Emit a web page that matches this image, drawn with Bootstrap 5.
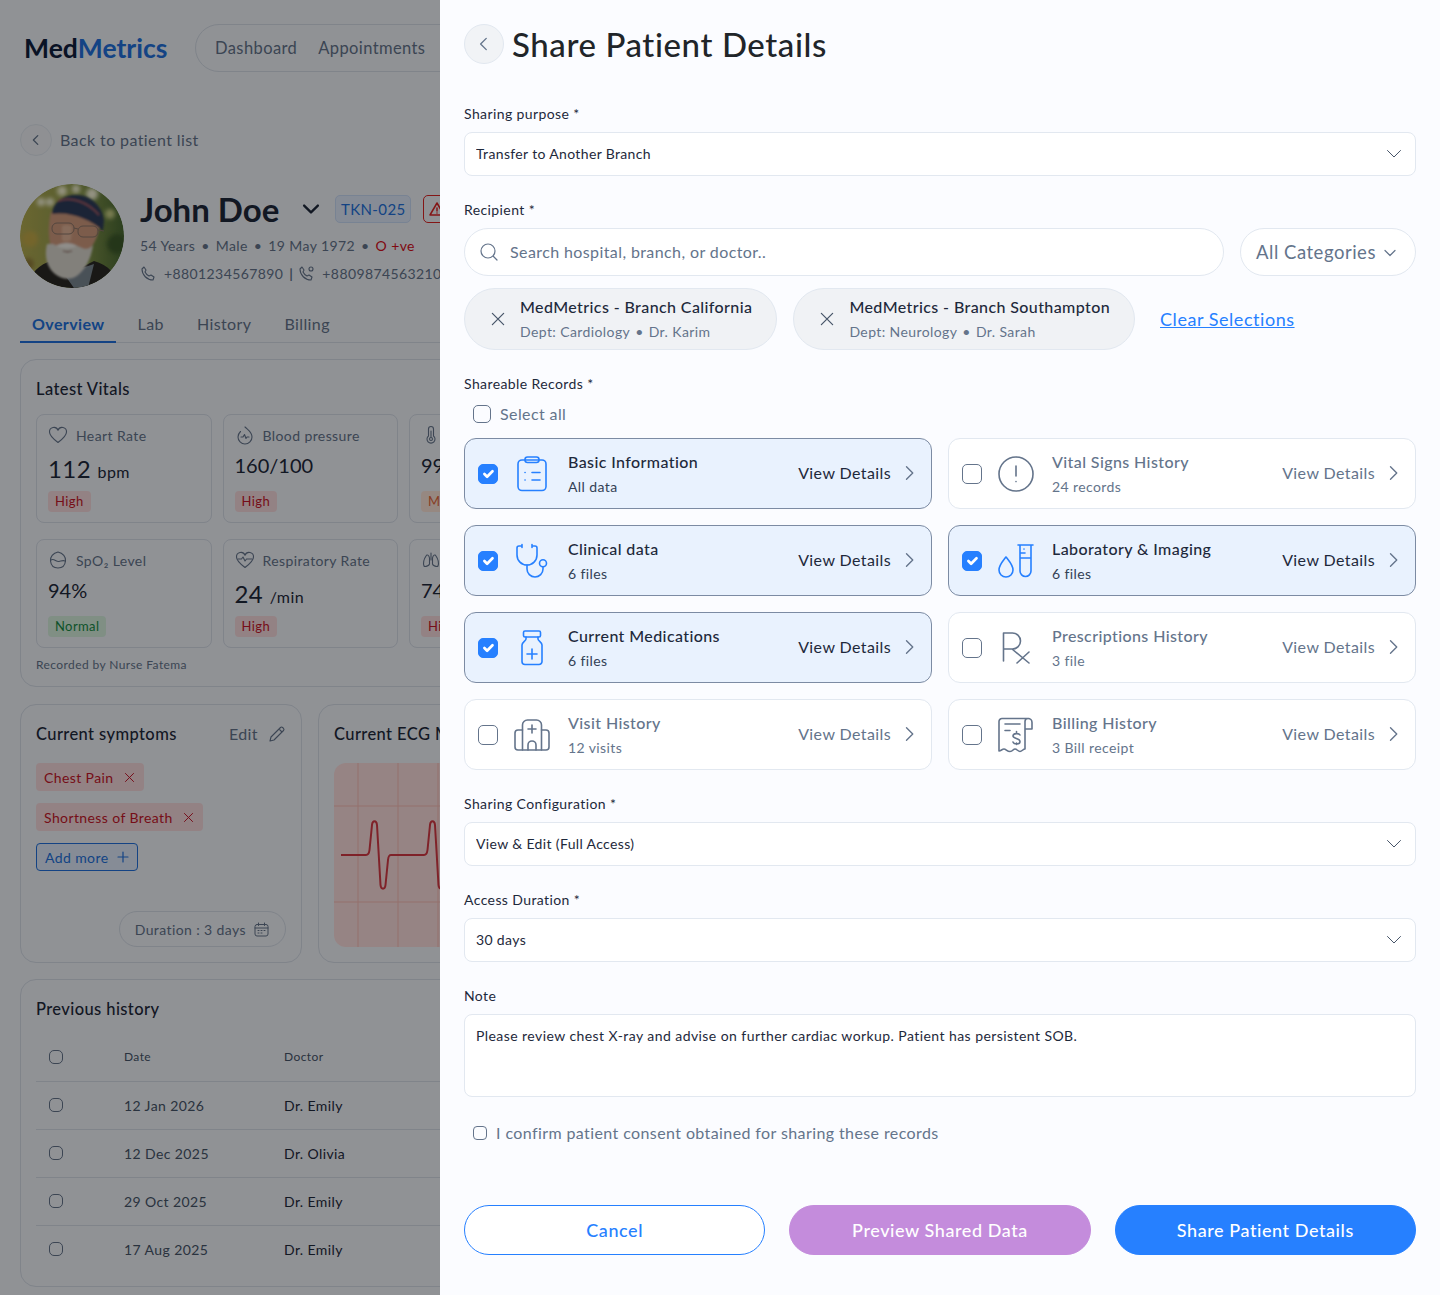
<!DOCTYPE html>
<html lang="en">

<head>
    <meta charset="UTF-8" />
    <title>MedMetrics - Share Patient Details</title>
    <link href="https://cdn.jsdelivr.net/npm/bootstrap@5.3.0/dist/css/bootstrap.min.css" rel="stylesheet" />
    <style>
        body {
            background: #f0f3f9;
            font-family: "Lato", "Liberation Sans", sans-serif;
            color: #1e293b;
            overflow: hidden;
            height: 1295px;
            letter-spacing: .025em;
        }

        .ic {
            fill: none;
            stroke: currentColor;
            stroke-width: 1.5;
            stroke-linecap: round;
            stroke-linejoin: round;
            flex-shrink: 0;
        }

        .offcanvas-backdrop.fade.show {
            background: #000;
            opacity: .4;
            transition: none;
        }

        .sep {
            margin: 0 5px;
        }

        /* page behind the panel */
        .top-bar {
            height: 96px;
            padding: 24px 24px 0;
        }

        .brand-name {
            height: 48px;
            font-size: 26.5px;
            font-weight: 700;
            width: 171px;
            color: #10203f;
            letter-spacing: 0;
            padding-top: 1px;
        }

        .brand-name span {
            color: #2271dc;
        }

        .top-links {
            width: 900px;
            height: 48px;
            border: 1px solid #d5dce6;
            border-radius: 24px;
            padding-left: 19px;
            gap: 21px;
            font-size: 16.5px;
            color: #64748b;
        }

        .page-wrap {
            padding: 28px 20px 0;
            width: 1440px;
        }

        .back-dot {
            width: 32px;
            height: 32px;
            border-radius: 50%;
            border: 1px solid #dfe5ed;
            background: #eef1f5;
            color: #64748b;
        }

        .back-row {
            font-size: 16px;
            color: #64748b;
            gap: 8px;
            margin-bottom: 28px;
        }

        .person-pic {
            width: 104px;
            height: 104px;
            border-radius: 50%;
            margin-right: 16px;
        }

        .person-name {
            font-size: 33px;
            font-weight: 700;
            line-height: 50px;
            margin: 0 21px 0 0;
            letter-spacing: 0;
        }

        .tkn-tag {
            height: 28px;
            width: 76px;
            border: 1px solid #c8daf5;
            background: #dfeafb;
            color: #2271dc;
            border-radius: 5px;
            font-size: 15px;
            margin-left: 13px;
        }

        .alert-tag {
            height: 28px;
            width: 100px;
            border: 1px solid #dc2626;
            border-radius: 5px;
            margin-left: 12px;
            color: #dc2626;
        }

        .person-meta {
            font-size: 14px;
            color: #64748b;
            line-height: 24px;
        }

        .person-meta .sep {
            margin: 0 6px;
        }

        .phone-row {
            margin-top: 4px;
        }

        .pipe {
            font-weight: 700;
            margin: 0 -3px 0 -2px;
        }

        .blood {
            color: #d50f1c;
        }

        .tab-row {
            margin-top: 24px;
            border-bottom: 1px solid #d5dce6;
            height: 31px;
            gap: 33px;
            padding-left: 12px;
            font-size: 16px;
            color: #64748b;
            margin-bottom: 16px;
        }

        .tab-on {
            color: #2271dc;
            font-weight: 700;
            position: relative;
        }

        .tab-on::after {
            content: "";
            position: absolute;
            left: -12px;
            right: -11px;
            top: 29px;
            height: 2px;
            background: #2271dc;
        }

        .box-round {
            border: 1px solid #d5dce6;
            border-radius: 16px;
            padding: 15px;
        }

        .box-title {
            font-size: 16.5px;
            font-weight: 500;
            line-height: 28px;
        }

        .vital-grid {
            display: grid;
            grid-template-columns: repeat(4, 175.5px);
            gap: 16px 11px;
            margin-top: 11px;
        }

        .vital-tile {
            border: 1px solid #d5dce6;
            border-radius: 8px;
            height: 109px;
            padding: 8px 11px;
        }

        .vital-label {
            font-size: 14px;
            color: #64748b;
            gap: 8px;
            height: 24px;
        }

        .vital-num {
            font-size: 24px;
            line-height: 32px;
            margin-top: 6px;
            height: 38px;
        }

        .vital-num small {
            font-size: 16px;
        }

        .vital-num.num-plain {
            font-size: 20px;
            letter-spacing: 0;
            margin-top: 2px;
            height: 42px;
        }

        .flag {
            display: block;
            width: fit-content;
            font-size: 13px;
            line-height: 21px;
            padding: 0 7px;
            border-radius: 4px;
        }

        .flag-high {
            background: #f6d9dc;
            color: #c5162a;
        }

        .flag-ok {
            background: #d5eedd;
            color: #178a45;
        }

        .flag-mid {
            background: #fbe3d8;
            color: #e2673a;
        }

        .recorded {
            font-size: 12px;
            color: #64748b;
            margin-top: 8px;
            line-height: 18px;
        }

        .mid-row {
            margin-top: 17px;
            gap: 16px;
            height: 259px;
        }

        .symptom-box {
            width: 282px;
            flex-shrink: 0;
            position: relative;
        }

        .ecg-box {
            flex-grow: 1;
        }

        .edit-link {
            color: #64748b;
            font-size: 16px;
            gap: 10px;
        }

        .sym-tag {
            height: 28px;
            background: #f6d9dc;
            color: #c5162a;
            border-radius: 4px;
            font-size: 14px;
            padding: 0 8px;
            gap: 9px;
            width: fit-content;
            margin-top: 12px;
        }

        .sym-first {
            margin-top: 15px;
        }

        .add-tag {
            background: #dfeafb;
            color: #2271dc;
            border: 1px solid #2271dc;
        }

        .duration-pill {
            position: absolute;
            right: 15px;
            bottom: 15px;
            height: 36px;
            border: 1px solid #d5dce6;
            border-radius: 18px;
            padding: 0 16px 0 15px;
            gap: 8px;
            font-size: 14px;
            color: #64748b;
        }

        .ecg-chart {
            display: block;
            margin-top: 15px;
            border-radius: 12px;
        }

        .history-box {
            margin-top: 16px;
            height: 308px;
        }

        .hist-table {
            margin: 10px 0 0;
            --bs-table-bg: transparent;
            --bs-table-color: #1e293b;
            --bs-table-border-color: #d5dce6;
            font-size: 14px;
        }

        .hist-table th,
        .hist-table td {
            height: 48px;
            vertical-align: middle;
            padding: 0;
            font-weight: 400;
        }

        .hist-table tr:last-child td {
            border-bottom: 0;
        }

        .hist-table th {
            font-size: 12px;
            color: #475569;
        }

        .hist-table .col-cb {
            width: 88px;
            padding-left: 13px;
        }

        .hist-table .col-date {
            width: 160px;
            color: #475569;
        }

        .hist-table .form-check-input {
            width: 14px;
            height: 14px;
            margin: 0;
            display: block;
        }

        /* panel */
        .share-panel {
            --bs-offcanvas-width: 1000px;
            --bs-offcanvas-border-width: 0;
            --bs-offcanvas-bg: #fbfcff;
            transition: none;
        }

        .share-body {
            padding: 24px;
            overflow: hidden;
        }

        .panel-head {
            height: 40px;
            gap: 8px;
            margin-bottom: 40px;
        }

        .panel-back {
            width: 40px;
            height: 40px;
            border-radius: 50%;
            border: 1px solid #e2e8f0;
            background: #f1f3f6;
            color: #64748b;
        }

        .panel-head h1 {
            font-size: 33px;
            font-weight: 500;
            margin: 2px 0 0;
            letter-spacing: .018em;
        }

        .fld-label {
            display: block;
            font-size: 14px;
            line-height: 20px;
            margin-bottom: 8px;
            color: #1e293b;
        }

        .fld-select,
        .fld-note {
            height: 44px;
            border: 1px solid #e2e8f0;
            border-radius: 8px;
            background-color: #fff;
            font-size: 14px;
            color: #1e293b;
            padding-left: 11px;
            letter-spacing: .025em;
            box-shadow: none;
            margin-bottom: 24px;
        }

        .fld-select {
            --bs-form-select-bg-img: url("data:image/svg+xml,%3csvg xmlns='http://www.w3.org/2000/svg' viewBox='0 0 16 10'%3e%3cpath fill='none' stroke='%23475569' stroke-linecap='round' stroke-linejoin='round' d='M1.5 1.5 8 8l6.5-6.5'/%3e%3c/svg%3e");
            background-position: right 13px center;
            background-size: 16px 10px;
            padding-top: 0;
            padding-bottom: 2px;
        }

        .fld-note {
            height: 83px;
            resize: none;
            padding-top: 10px;
            letter-spacing: .031em;
        }

        .search-wrap {
            height: 48px;
            border: 1px solid #e2e8f0;
            border-radius: 24px;
            background: #fff;
            padding: 0 15px;
            gap: 10px;
            flex-grow: 1;
            color: #64748b;
        }

        .search-wrap input {
            border: 0;
            outline: 0;
            background: transparent;
            flex-grow: 1;
            font-size: 16px;
            letter-spacing: .025em;
        }

        .search-wrap input::placeholder {
            color: #64748b;
        }

        .cat-btn {
            width: 176px;
            height: 48px;
            border: 1px solid #e2e8f0;
            border-radius: 24px;
            background: #fff;
            color: #64748b;
            font-size: 18.5px;
            letter-spacing: .028em;
            padding: 1px 17px 0 15px;
        }

        .chip-row {
            margin: 12px 0 24px;
            gap: 16px;
        }

        .rec-chip {
            height: 62px;
            border: 1px solid #e2e8f0;
            border-radius: 31px;
            background: #f0f2f5;
            padding: 0 24px 0 24px;
            gap: 13px;
            color: #475569;
        }

        .rec-chip b {
            display: block;
            font-size: 16px;
            font-weight: 500;
            line-height: 24px;
            color: #1e293b;
        }

        .rec-chip span.sub-line {
            display: block;
            font-size: 14px;
            line-height: 24px;
            margin-top: 1px;
            color: #64748b;
        }

        .clear-link {
            font-size: 18px;
            color: #2680ff;
            margin-left: 9px;
            letter-spacing: .03em;
        }

        .select-all {
            height: 24px;
            margin: 8px 0 12px 9px;
            gap: 9px;
            font-size: 16px;
            color: #64748b;
        }

        .select-all .form-check-input {
            width: 18px;
            height: 18px;
            margin: 0;
        }

        .form-check-input {
            border: 1.5px solid #64748b;
            background-color: transparent;
            box-shadow: none;
        }

        .form-check-input[type=checkbox] {
            border-radius: 5px;
        }

        .form-check-input:checked {
            background-color: #2680ff;
            border-color: #2680ff;
        }

        .rec-card {
            height: 71px;
            border: 1px solid #e2e8f0;
            border-radius: 12px;
            background: #fff;
            padding: 0 12px 0 13px;
            color: #64748b;
        }

        .rec-card .form-check-input {
            width: 20px;
            height: 20px;
            margin: 0;
            flex-shrink: 0;
        }

        .rec-icon {
            width: 36px;
            height: 36px;
            margin: 0 18px 0 16px;
            flex-shrink: 0;
            stroke-width: 1.6;
        }

        .rec-title {
            font-size: 16px;
            font-weight: 500;
            line-height: 24px;
            margin-top: 1px;
        }

        .rec-sub {
            font-size: 14px;
            line-height: 24px;
            margin-top: 1px;
        }

        .view-link {
            font-size: 16px;
            margin-left: auto;
            gap: 8px;
            margin-top: -2px;
        }

        .view-link svg {
            stroke-width: 1.1;
        }

        .rec-card.picked {
            background: #e9f2fe;
            border-color: #7c8ba3;
            color: #1e293b;
        }

        .rec-card.picked .rec-icon {
            color: #2680ff;
        }

        .rec-card.picked .rec-sub {
            color: #334155;
        }

        .rec-card.picked .view-link svg {
            color: #64748b;
        }

        .records-grid {
            margin-bottom: 24px;
        }

        .consent-row {
            height: 24px;
            margin: 0 0 60px 9px;
            gap: 9px;
            font-size: 16px;
            color: #64748b;
        }

        .consent-row .form-check-input {
            width: 14px;
            height: 14px;
            margin: 0;
        }

        .consent-row .form-check-input[type=checkbox] {
            border-radius: 4px;
        }

        .foot-btns {
            gap: 24px;
        }

        .foot-btn {
            flex: 1 1 0;
            height: 50px;
            border-radius: 25px;
            font-size: 18px;
            font-weight: 500;
            letter-spacing: .032em;
            border: 1px solid #2680ff;
        }

        .btn-cancel {
            color: #2680ff;
            background: #fff;
        }

        .btn-preview {
            background: #c48cdc;
            border-color: #c48cdc;
            color: #fff;
        }

        .btn-share {
            background: #2680ff;
            color: #fff;
        }
    </style>
</head>

<body>

    <svg width="0" height="0" class="position-absolute">
        <symbol id="chev-r" viewBox="0 0 16 16"><path d="M6 3l5 5-5 5" /></symbol>
        <symbol id="chev-l" viewBox="0 0 16 16"><path d="M10 3L5 8l5 5" /></symbol>
        <symbol id="chev-d" viewBox="0 0 16 16"><path d="M3 5.5l5 5 5-5" /></symbol>
        <symbol id="cross" viewBox="0 0 16 16"><path d="M3 3l10 10M13 3L3 13" /></symbol>
    </svg>

    <!-- page behind the panel -->
    <header class="top-bar d-flex">
        <div class="brand-name d-flex align-items-center">Med<span>Metrics</span></div>
        <div class="top-links d-flex align-items-center">
            <span>Dashboard</span>
            <span>Appointments</span>
        </div>
    </header>

    <main class="page-wrap">
        <div class="back-row d-flex align-items-center">
            <span class="back-dot d-flex align-items-center justify-content-center"><svg class="ic" width="14" height="14"><use href="#chev-l" /></svg></span>
            Back to patient list
        </div>

        <div class="d-flex">
            <svg class="person-pic" viewBox="0 0 104 104">
                <defs>
                    <clipPath id="pic-clip"><circle cx="52" cy="52" r="52" /></clipPath>
                    <linearGradient id="pic-bg" x1="0" x2="1" y1="0" y2="0">
                        <stop offset="0" stop-color="#b3ab52" />
                        <stop offset=".55" stop-color="#8d9a4e" />
                        <stop offset="1" stop-color="#4a6a34" />
                    </linearGradient>
                    <filter id="pic-blur"><feGaussianBlur stdDeviation="2" /></filter>
                    <filter id="pic-soft"><feGaussianBlur stdDeviation=".8" /></filter>
                </defs>
                <g clip-path="url(#pic-clip)">
                    <rect width="104" height="104" fill="url(#pic-bg)" />
                    <g filter="url(#pic-blur)">
                        <circle cx="21" cy="18" r="4" fill="#f4f3d6" />
                        <circle cx="30" cy="18" r="4" fill="#f4f3d6" />
                        <circle cx="42" cy="7" r="5" fill="#f5f3d0" />
                        <circle cx="56" cy="5" r="4" fill="#f5f3d8" />
                        <circle cx="72" cy="10" r="6" fill="#f5f3d8" />
                        <circle cx="90" cy="30" r="5" fill="#c9cf86" />
                        <circle cx="10" cy="55" r="8" fill="#c2a84a" />
                        <circle cx="97" cy="60" r="10" fill="#3c5a2a" />
                        <circle cx="8" cy="80" r="6" fill="#8f7a3a" />
                    </g>
                    <path d="M8 104c2-12 6-20 20-26l24 10 22-11c14 4 24 14 26 27z" fill="#2a2825" />
                    <path d="M44 90l10 14h14l6-24z" fill="#7b8792" />
                    <g filter="url(#pic-soft)">
                        <path d="M31 28c-3 12-3 26 0 36 5 9 14 12 24 10 14-4 22-16 24-30 1-6 0-10-1-14z" fill="#cf9a7e" />
                        <path d="M42 42c5-2 8-1 10 1l-1 13c-4 2-7 2-9 0z" fill="#e0b398" />
                        <path d="M32 30c1-12 12-20 26-19 14 1 25 12 26 26l-1 10c-11-11-33-20-51-17z" fill="#2d3c5a" />
                        <path d="M38 17c13-5 30 1 41 14" fill="none" stroke="#a55f68" stroke-width="1.4" />
                        <path d="M27 60c-3 12 0 24 8 30 6 5 14 6 20 3 9-5 16-17 18-32-3 4-7 5-11 3-5-3-11-4-16-1-5 0-10-1-13-3-2 0-4 0-6 0z" fill="#d9d6cd" />
                        <path d="M36 62c6-4 15-4 21 0-6 3-15 3-21 0z" fill="#efece6" />
                        <path d="M43 67c3 1 6 1 9 0" stroke="#86594e" stroke-width="1.3" fill="none" />
                    </g>
                    <g fill="none" stroke="#8a7468" stroke-width="1">
                        <rect x="32" y="39" width="22" height="11" rx="5" />
                        <rect x="58" y="42" width="20" height="11" rx="5" />
                        <path d="M54 44l4 1M78 46l6 1" />
                    </g>
                </g>
            </svg>
            <div>
                <div class="d-flex align-items-center">
                    <h2 class="person-name">John Doe</h2>
                    <svg class="ic" width="22" height="22" style="stroke-width:1.7"><use href="#chev-d" /></svg>
                    <span class="tkn-tag d-flex align-items-center justify-content-center">TKN-025</span>
                    <span class="alert-tag d-flex align-items-center ps-1">
                        <svg class="ic" width="18" height="18" viewBox="0 0 18 18"><path d="M9 3l7 12H2zM9 8v3M9 13v.1" /></svg>
                    </span>
                </div>
                <div class="person-meta">54 Years<span class="sep">•</span>Male<span class="sep">•</span>19 May 1972<span class="sep">•</span><span class="blood">O +ve</span></div>
                <div class="person-meta phone-row d-flex align-items-center gap-2">
                    <svg class="ic" width="16" height="16" viewBox="0 0 16 16" style="stroke-width:1.1"><path d="M2 3c0 6 5 11 11 11l1-3-3-2-2 1C7 9 6 8 5 6l1-2-2-3z" /></svg>
                    <span>+8801234567890</span>
                    <span class="pipe">|</span>
                    <svg class="ic" width="16" height="16" viewBox="0 0 16 16" style="stroke-width:1.1"><path d="M2 3c0 6 5 11 11 11l1-3-3-2-2 1C7 9 6 8 5 6l1-2-2-3z" /><circle cx="13" cy="3" r="2" /></svg>
                    <span>+8809874563210</span>
                </div>
            </div>
        </div>

        <div class="tab-row d-flex">
            <span class="tab-on">Overview</span>
            <span>Lab</span>
            <span>History</span>
            <span>Billing</span>
        </div>

        <section class="box-round" style="height:328px">
            <div class="box-title">Latest Vitals</div>
            <div class="vital-grid">
                <div class="vital-tile">
                    <div class="vital-label d-flex align-items-center">
                        <svg class="ic" width="20" height="20" viewBox="0 0 20 20" style="stroke-width:1.1"><path d="M10 17.5C4 13 1.5 10 1.5 7A4.4 4.4 0 0 1 10 5.2 4.4 4.4 0 0 1 18.5 7c0 3-2.5 6-8.5 10.5z" /></svg>
                        Heart Rate
                    </div>
                    <div class="vital-num">112 <small>bpm</small></div>
                    <span class="flag flag-high">High</span>
                </div>
                <div class="vital-tile">
                    <div class="vital-label d-flex align-items-center">
                        <svg class="ic" width="20" height="20" viewBox="0 0 20 20" style="stroke-width:1.1"><path d="M10 2c3 3 7 5 7 10a7 7 0 0 1-14 0c0-2 1-4 2.5-5.5" /><path d="M6 12h2l1.5-2.5 1.5 4 1-1.5h2" /></svg>
                        Blood pressure
                    </div>
                    <div class="vital-num num-plain">160/100</div>
                    <span class="flag flag-high">High</span>
                </div>
                <div class="vital-tile">
                    <div class="vital-label d-flex align-items-center">
                        <svg class="ic" width="20" height="20" viewBox="0 0 20 20" style="stroke-width:1.1"><path d="M7.5 11V4a2.5 2.5 0 0 1 5 0v7a4 4 0 1 1-5 0z" /><circle cx="10" cy="14" r="1.5" /><path d="M10 6v6" /></svg>
                    </div>
                    <div class="vital-num num-plain">99</div>
                    <span class="flag flag-mid">Mild</span>
                </div>
                <div class="vital-tile">
                    <div class="vital-num">&nbsp;</div>
                </div>
                <div class="vital-tile">
                    <div class="vital-label d-flex align-items-center">
                        <svg class="ic" width="20" height="20" viewBox="0 0 20 20" style="stroke-width:1.1"><path d="M10 2c-5 1-8 5-7.5 9 .5 4.5 3.5 7 7.5 7s7-2.5 7.5-7C18 7 15 3 10 2z" /><path d="M3 10c3-2 5 2 8 1.5 2-.3 4-1.500 6-.5" /></svg>
                        SpO₂ Level
                    </div>
                    <div class="vital-num num-plain">94%</div>
                    <span class="flag flag-ok">Normal</span>
                </div>
                <div class="vital-tile">
                    <div class="vital-label d-flex align-items-center">
                        <svg class="ic" width="20" height="20" viewBox="0 0 20 20" style="stroke-width:1.1"><path d="M10 17.5C4 13 1.5 10 1.5 7A4.4 4.4 0 0 1 10 5.2 4.4 4.4 0 0 1 18.5 7c0 3-2.5 6-8.5 10.5z" /><path d="M3 9h3.5l1.5-2 2 4 1.5-2H17" /></svg>
                        Respiratory Rate
                    </div>
                    <div class="vital-num">24 <small>/min</small></div>
                    <span class="flag flag-high">High</span>
                </div>
                <div class="vital-tile">
                    <div class="vital-label d-flex align-items-center">
                        <svg class="ic" width="20" height="20" viewBox="0 0 20 20" style="stroke-width:1.1"><path d="M10 3v7M8.5 8C8 5 6 4 5 6 3 9 2 13 3 16c1 1 5 0 5.5-2zM11.5 8c.5-3 2.5-4 3.500-2 2 3 3 7 2 10-1 1-5 0-5.500-2z" /></svg>
                    </div>
                    <div class="vital-num num-plain">74</div>
                    <span class="flag flag-high">High</span>
                </div>
            </div>
            <div class="recorded">Recorded by Nurse Fatema</div>
        </section>

        <div class="mid-row d-flex">
            <section class="box-round symptom-box">
                <div class="d-flex align-items-center justify-content-between" style="height:28px;">
                    <div class="box-title">Current symptoms</div>
                    <div class="edit-link d-flex align-items-center">Edit
                        <svg class="ic" width="18" height="18" viewBox="0 0 18 18" style="stroke-width:1.1"><path d="M2 16l1-4L12.5 2.5a1.5 1.5 0 0 1 2.1 0l.9.9a1.5 1.5 0 0 1 0 2.1L6 15zM11 4l3 3" /></svg>
                    </div>
                </div>
                <div class="sym-tag sym-first d-flex align-items-center">Chest Pain <svg class="ic" width="13" height="13" style="stroke-width:1.2"><use href="#cross" /></svg></div>
                <div class="sym-tag d-flex align-items-center">Shortness of Breath <svg class="ic" width="13" height="13" style="stroke-width:1.2"><use href="#cross" /></svg></div>
                <div class="sym-tag add-tag d-flex align-items-center">Add more <svg class="ic" width="12" height="12" viewBox="0 0 12 12" style="stroke-width:1.2"><path d="M6 1v10M1 6h10" /></svg></div>
                <div class="duration-pill d-flex align-items-center">Duration : 3 days
                    <svg class="ic" width="15" height="15" viewBox="0 0 15 15" style="stroke-width:1"><rect x="1" y="2.5" width="13" height="11.5" rx="2" /><path d="M1 6h13M4.5 1v2.5M10.5 1v2.5M4 8.5h1M7 8.5h1M10 8.5h1M4 11h1M7 11h1" /></svg>
                </div>
            </section>
            <section class="box-round ecg-box">
                <div class="box-title">Current ECG Monitor</div>
                <svg class="ecg-chart" width="400" height="184" viewBox="0 0 400 184">
                    <rect width="400" height="184" fill="#fbdcdc" />
                    <path d="M24 0v184M64 0v184M104 0v184M0 43h400M0 139h400" stroke="#f6bcb4" stroke-width="1" fill="none" />
                    <path d="M7 92h25c2 0 3-1 3.5-5L38 62c.5-5 4.5-5 5 0l3.5 60c.5 5 4.5 5 5 0L54 97c.5-4 1-5 3-5h33c2 0 3-1 3.5-5L96 62c.5-5 4.5-5 5 0l3.5 60c.5 5 4.5 5 5 0l2.5-25c.5-4 1-5 3-5h10" fill="none" stroke="#d43a45" stroke-width="2" />
                </svg>
            </section>
        </div>

        <section class="box-round history-box">
            <div class="box-title">Previous history</div>
            <table class="table hist-table">
                <thead>
                    <tr><th class="col-cb"><input class="form-check-input" type="checkbox" /></th><th class="col-date">Date</th><th>Doctor</th></tr>
                </thead>
                <tbody>
                    <tr><td class="col-cb"><input class="form-check-input" type="checkbox" /></td><td class="col-date">12 Jan 2026</td><td>Dr. Emily</td></tr>
                    <tr><td class="col-cb"><input class="form-check-input" type="checkbox" /></td><td class="col-date">12 Dec 2025</td><td>Dr. Olivia</td></tr>
                    <tr><td class="col-cb"><input class="form-check-input" type="checkbox" /></td><td class="col-date">29 Oct 2025</td><td>Dr. Emily</td></tr>
                    <tr><td class="col-cb"><input class="form-check-input" type="checkbox" /></td><td class="col-date">17 Aug 2025</td><td>Dr. Emily</td></tr>
                </tbody>
            </table>
        </section>
    </main>

    <div class="offcanvas-backdrop fade show"></div>

    <!-- share panel: the backdrop is the div above, so bootstrap must not add a second one on load -->
    <aside class="offcanvas offcanvas-end show share-panel" tabindex="-1" data-bs-backdrop="false">
        <div class="offcanvas-body share-body">
            <div class="panel-head d-flex align-items-center">
                <span class="panel-back d-flex align-items-center justify-content-center"><svg class="ic" width="18" height="18" style="stroke-width:1.2"><use href="#chev-l" /></svg></span>
                <h1>Share Patient Details</h1>
            </div>

            <label class="fld-label">Sharing purpose *</label>
            <select class="form-select fld-select">
                <option>Transfer to Another Branch</option>
            </select>

            <label class="fld-label">Recipient *</label>
            <div class="d-flex gap-3">
                <div class="search-wrap d-flex align-items-center">
                    <svg class="ic" width="18" height="18" viewBox="0 0 18 18" style="stroke-width:1.2"><circle cx="8" cy="8" r="7" /><path d="M13.5 13.5L17 17" /></svg>
                    <input type="text" placeholder="Search hospital, branch, or doctor.." />
                </div>
                <button class="cat-btn d-flex align-items-center justify-content-between" type="button">All Categories
                    <svg class="ic" width="16" height="16" style="stroke-width:1.2"><use href="#chev-d" /></svg>
                </button>
            </div>

            <div class="chip-row d-flex align-items-center">
                <div class="rec-chip d-flex align-items-center">
                    <svg class="ic" width="18" height="18" style="stroke-width:1.1"><use href="#cross" /></svg>
                    <div>
                        <b>MedMetrics - Branch California</b>
                        <span class="sub-line">Dept: Cardiology<span class="sep">•</span>Dr. Karim</span>
                    </div>
                </div>
                <div class="rec-chip d-flex align-items-center">
                    <svg class="ic" width="18" height="18" style="stroke-width:1.1"><use href="#cross" /></svg>
                    <div>
                        <b>MedMetrics - Branch Southampton</b>
                        <span class="sub-line">Dept: Neurology<span class="sep">•</span>Dr. Sarah</span>
                    </div>
                </div>
                <a class="clear-link" href="#">Clear Selections</a>
            </div>

            <label class="fld-label mb-0">Shareable Records *</label>
            <div class="select-all d-flex align-items-center">
                <input class="form-check-input" type="checkbox" />
                Select all
            </div>

            <div class="row row-cols-2 g-3 records-grid">
                <div class="col">
                    <div class="rec-card picked d-flex align-items-center">
                        <input class="form-check-input" type="checkbox" checked />
                        <svg class="ic rec-icon" viewBox="0 0 36 36"><rect x="4" y="4" width="28" height="30.5" rx="4" /><rect x="11" y="1" width="14" height="5.5" rx="2.5" /><path d="M11 16.5h.1M18 16.5h8M11 24h.1M18 24h8" /></svg>
                        <div>
                            <div class="rec-title">Basic Information</div>
                            <div class="rec-sub">All data</div>
                        </div>
                        <div class="view-link d-flex align-items-center">View Details <svg class="ic" width="20" height="20"><use href="#chev-r" /></svg></div>
                    </div>
                </div>
                <div class="col">
                    <div class="rec-card d-flex align-items-center">
                        <input class="form-check-input" type="checkbox" />
                        <svg class="ic rec-icon" viewBox="0 0 36 36"><circle cx="18" cy="18" r="17" /><path d="M18 10v10M18 25.5v.1" /></svg>
                        <div>
                            <div class="rec-title">Vital Signs History</div>
                            <div class="rec-sub">24 records</div>
                        </div>
                        <div class="view-link d-flex align-items-center">View Details <svg class="ic" width="20" height="20"><use href="#chev-r" /></svg></div>
                    </div>
                </div>
                <div class="col">
                    <div class="rec-card picked d-flex align-items-center">
                        <input class="form-check-input" type="checkbox" checked />
                        <svg class="ic rec-icon" viewBox="0 0 36 36"><path d="M8 3H5a2 2 0 0 0-2 2v7a10 10 0 0 0 20 0V5a2 2 0 0 0-2-2h-3M8 1.5v3M18 1.5v3" /><path d="M13 22v4a8 8 0 0 0 16 0v-2" /><circle cx="29" cy="20.3" r="3.5" /></svg>
                        <div>
                            <div class="rec-title">Clinical data</div>
                            <div class="rec-sub">6 files</div>
                        </div>
                        <div class="view-link d-flex align-items-center">View Details <svg class="ic" width="20" height="20"><use href="#chev-r" /></svg></div>
                    </div>
                </div>
                <div class="col">
                    <div class="rec-card picked d-flex align-items-center">
                        <input class="form-check-input" type="checkbox" checked />
                        <svg class="ic rec-icon" viewBox="0 0 36 36"><path d="M20 2h15M22 2v26a5.5 5.5 0 0 0 11 0V2M22 10h5M22 15h11M26 6v.1" /><path d="M8 14c-3 4-7 8-7 13a7 7 0 0 0 14 0c0-5-4-9-7-13z" /></svg>
                        <div>
                            <div class="rec-title">Laboratory &amp; Imaging</div>
                            <div class="rec-sub">6 files</div>
                        </div>
                        <div class="view-link d-flex align-items-center">View Details <svg class="ic" width="20" height="20"><use href="#chev-r" /></svg></div>
                    </div>
                </div>
                <div class="col">
                    <div class="rec-card picked d-flex align-items-center">
                        <input class="form-check-input" type="checkbox" checked />
                        <svg class="ic rec-icon" viewBox="0 0 36 36"><rect x="9.5" y="1" width="17" height="6" rx="1.5" /><path d="M12 7v2c0 2-4 3-4 6v16.5a3 3 0 0 0 3 3h14a3 3 0 0 0 3-3V15c0-3-4-4-4-6V7M18 19v10M13 24h10" /></svg>
                        <div>
                            <div class="rec-title">Current Medications</div>
                            <div class="rec-sub">6 files</div>
                        </div>
                        <div class="view-link d-flex align-items-center">View Details <svg class="ic" width="20" height="20"><use href="#chev-r" /></svg></div>
                    </div>
                </div>
                <div class="col">
                    <div class="rec-card d-flex align-items-center">
                        <input class="form-check-input" type="checkbox" />
                        <svg class="ic rec-icon" viewBox="0 0 36 36"><path d="M5.5 31V3h9a8 8 0 0 1 0 16h-9M14 19l17 14M31 22L19 33" /></svg>
                        <div>
                            <div class="rec-title">Prescriptions History</div>
                            <div class="rec-sub">3 file</div>
                        </div>
                        <div class="view-link d-flex align-items-center">View Details <svg class="ic" width="20" height="20"><use href="#chev-r" /></svg></div>
                    </div>
                </div>
                <div class="col">
                    <div class="rec-card d-flex align-items-center">
                        <input class="form-check-input" type="checkbox" />
                        <svg class="ic rec-icon" viewBox="0 0 36 36"><path d="M8.5 33V8a5 5 0 0 1 5-5h9a5 5 0 0 1 5 5v25" /><path d="M8.5 13H4a3 3 0 0 0-3 3v14a3 3 0 0 0 3 3h28a3 3 0 0 0 3-3V16a3 3 0 0 0-3-3h-4.5" /><path d="M18 8v8M14 12h8M14 33v-5a4 4 0 0 1 8 0v5" /></svg>
                        <div>
                            <div class="rec-title">Visit History</div>
                            <div class="rec-sub">12 visits</div>
                        </div>
                        <div class="view-link d-flex align-items-center">View Details <svg class="ic" width="20" height="20"><use href="#chev-r" /></svg></div>
                    </div>
                </div>
                <div class="col">
                    <div class="rec-card d-flex align-items-center">
                        <input class="form-check-input" type="checkbox" />
                        <svg class="ic rec-icon" viewBox="0 0 36 36"><path d="M31 1.5H4a3 3 0 0 0-3 3V34c2 0 3-2 5-2s3 2.5 6 2.5 3-2.5 5-2.5 3 2.5 5 2.5 3-2.5 5-2.5V4.5a3 3 0 0 1 3-3 4 4 0 0 1 4 4V12h-7" /><path d="M7 7h15M7 13.5h5M18.5 14.5v1.5M18.5 26v1.5M22 18c-1-2-7-2-7 1s7 2 7 5.5-6 3-7 .5" /></svg>
                        <div>
                            <div class="rec-title">Billing History</div>
                            <div class="rec-sub">3 Bill receipt</div>
                        </div>
                        <div class="view-link d-flex align-items-center">View Details <svg class="ic" width="20" height="20"><use href="#chev-r" /></svg></div>
                    </div>
                </div>
            </div>

            <label class="fld-label">Sharing Configuration *</label>
            <select class="form-select fld-select">
                <option>View &amp; Edit (Full Access)</option>
            </select>

            <label class="fld-label">Access Duration *</label>
            <select class="form-select fld-select">
                <option>30 days</option>
            </select>

            <label class="fld-label">Note</label>
            <textarea class="form-control fld-note">Please review chest X-ray and advise on further cardiac workup. Patient has persistent SOB.</textarea>

            <div class="consent-row d-flex align-items-center">
                <input class="form-check-input" type="checkbox" />
                I confirm patient consent obtained for sharing these records
            </div>

            <div class="foot-btns d-flex">
                <button class="btn foot-btn btn-cancel" type="button">Cancel</button>
                <button class="btn foot-btn btn-preview" type="button">Preview Shared Data</button>
                <button class="btn foot-btn btn-share" type="button">Share Patient Details</button>
            </div>
        </div>
    </aside>

    <script src="https://cdn.jsdelivr.net/npm/bootstrap@5.3.0/dist/js/bootstrap.bundle.min.js"></script>
</body>

</html>
